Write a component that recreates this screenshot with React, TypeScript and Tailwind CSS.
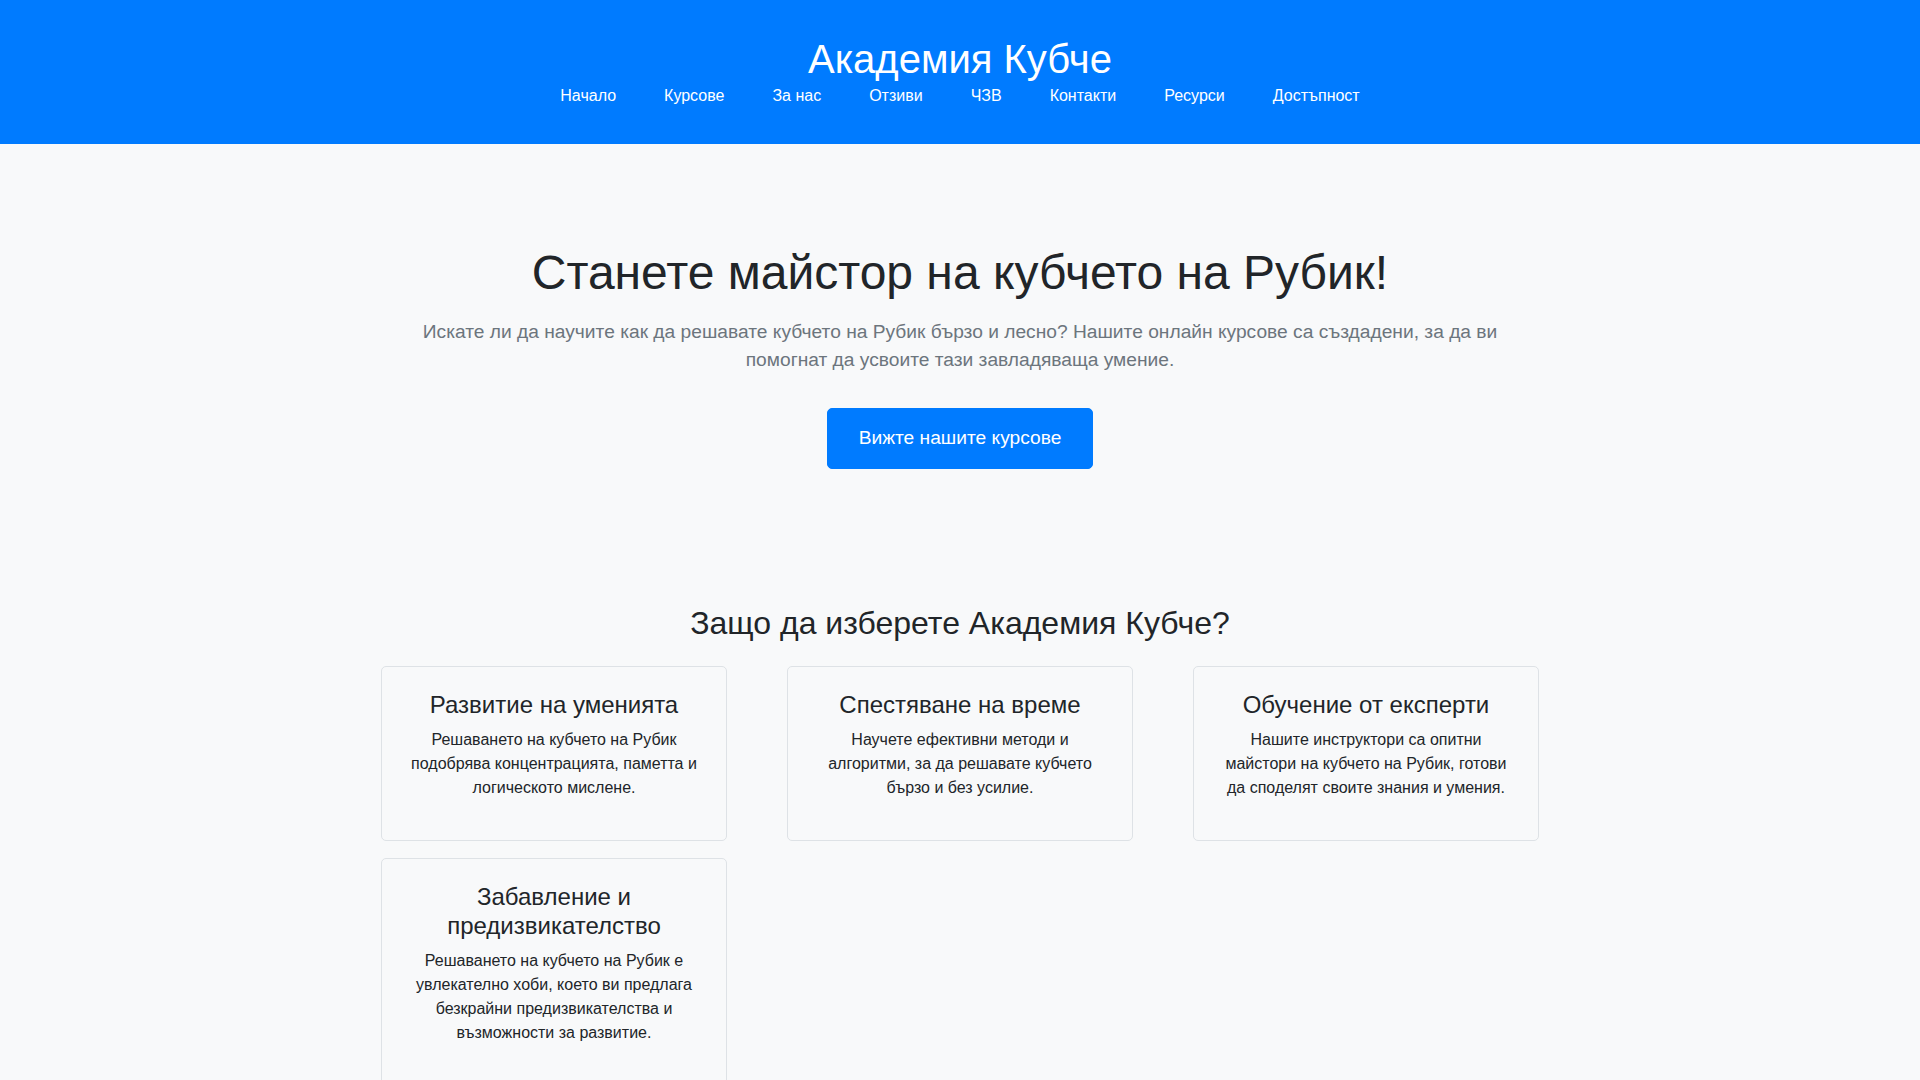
const navItems = ['Начало', 'Курсове', 'За нас', 'Отзиви', 'ЧЗВ', 'Контакти', 'Ресурси', 'Достъпност'];

const features = [
  {
    title: 'Развитие на уменията',
    text: 'Решаването на кубчето на Рубик подобрява концентрацията, паметта и логическото мислене.',
  },
  {
    title: 'Спестяване на време',
    text: 'Научете ефективни методи и алгоритми, за да решавате кубчето бързо и без усилие.',
  },
  {
    title: 'Обучение от експерти',
    text: 'Нашите инструктори са опитни майстори на кубчето на Рубик, готови да споделят своите знания и умения.',
  },
  {
    title: 'Забавление и предизвикателство',
    text: 'Решаването на кубчето на Рубик е увлекателно хоби, което ви предлага безкрайни предизвикателства и възможности за развитие.',
  },
];

export default function App() {
  return (
    <div className="min-h-screen bg-[#f8f9fa] text-[#212529] font-['Liberation_Sans',Arial,sans-serif]">
      <header className="bg-[#007bff] text-white text-center pt-[35px] pb-[36px]">
        <h1 className="text-[40px] leading-[1.2] font-normal">Академия Кубче</h1>
        <nav className="mt-[1px]">
          <ul className="flex justify-center gap-12 text-base leading-6">
            {navItems.map((item) => (
              <li key={item}>
                <a href="#" className="text-white">{item}</a>
              </li>
            ))}
          </ul>
        </nav>
      </header>

      <main className="max-w-[1140px] mx-auto px-[15px]">
        {/* hero */}
        <section className="text-center pt-[100px]">
          <h2 className="text-[48px] leading-[1.2] font-normal">Станете майстор на кубчето на Рубик!</h2>
          <p className="mt-[16px] text-[19.2px] leading-[1.5] text-[#6c757d]">
            Искате ли да научите как да решавате кубчето на Рубик бързо и лесно? Нашите онлайн курсове са създадени, за да ви помогнат да усвоите тази завладяваща умение.
          </p>
          <a
            href="#"
            className="inline-block mt-[33px] bg-[#007bff] text-white text-[19.2px] leading-[1.5] px-[31px] py-[15px] rounded-[5px] border border-[#007bff]"
          >
            Вижте нашите курсове
          </a>
        </section>

        {/* features */}
        <section className="pt-[135px] pb-10">
          <h2 className="text-center text-[32px] leading-[1.2] font-normal">Защо да изберете Академия Кубче?</h2>
          <div className="mt-[24px] grid grid-cols-[repeat(3,346px)] justify-center gap-x-[60px] gap-y-[17px]">
            {features.map((f) => (
              <div key={f.title} className="border border-[#dee2e6] rounded-[5px] p-6 text-center">
                <h3 className="text-[24px] leading-[1.2] mb-2 font-normal">{f.title}</h3>
                <p className="text-base leading-6 mb-4">{f.text}</p>
              </div>
            ))}
          </div>
        </section>
      </main>
    </div>
  );
}
